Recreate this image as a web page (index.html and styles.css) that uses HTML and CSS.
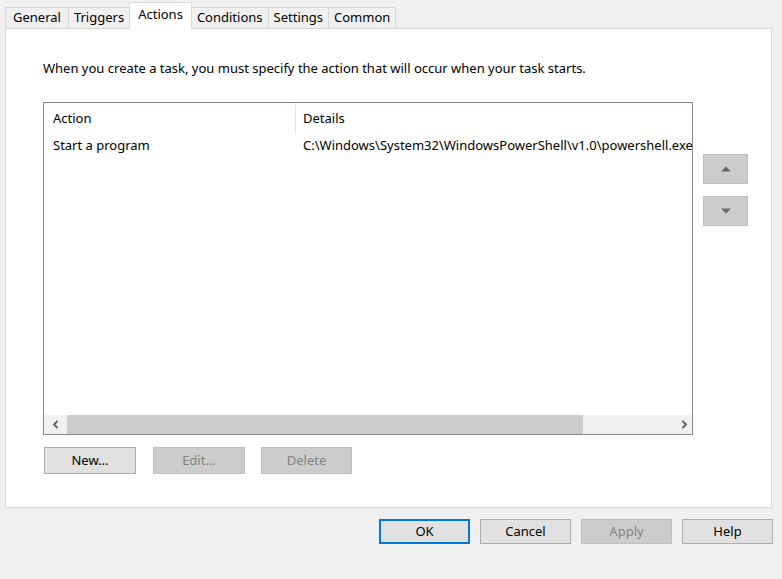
FILE: index.html
```html
<!DOCTYPE html>
<html lang="en">
<head>
  <meta charset="UTF-8">
  <title>Task Properties - Actions</title>
  <link rel="stylesheet" href="styles.css">
</head>
<body>
  <div class="dialog">
    <div class="tabs">
      <div class="tab">General</div>
      <div class="tab">Triggers</div>
      <div class="tab selected">Actions</div>
      <div class="tab">Conditions</div>
      <div class="tab">Settings</div>
      <div class="tab">Common</div>
    </div>

    <div class="panel">
      <p class="intro">When you create a task, you must specify the action that will occur when your task starts.</p>

      <div class="list-row">
        <div class="listbox">
          <div class="list-head">
            <div class="col col-action">Action</div>
            <div class="col col-details">Details</div>
          </div>
          <div class="list-body">
            <div class="list-item">
              <div class="col col-action">Start a program</div>
              <div class="col col-details">C:\Windows\System32\WindowsPowerShell\v1.0\powershell.exe</div>
            </div>
          </div>
          <div class="hscroll">
            <div class="sb-arrow">
              <svg width="8" height="9" viewBox="0 0 8 9"><path d="M5.5 1 L2 4.5 L5.5 8" fill="none" stroke="#606060" stroke-width="1.8"/></svg>
            </div>
            <div class="sb-thumb"></div>
            <div class="sb-track"></div>
            <div class="sb-arrow">
              <svg width="8" height="9" viewBox="0 0 8 9"><path d="M2.5 1 L6 4.5 L2.5 8" fill="none" stroke="#606060" stroke-width="1.8"/></svg>
            </div>
          </div>
        </div>

        <div class="move-btns">
          <div class="move-btn">
            <svg width="10" height="6" viewBox="0 0 10 6"><path d="M0 5.5 L5 0.5 L10 5.5 Z" fill="#6a6a6a"/></svg>
          </div>
          <div class="move-btn">
            <svg width="10" height="6" viewBox="0 0 10 6"><path d="M0 0.5 L5 5.5 L10 0.5 Z" fill="#6a6a6a"/></svg>
          </div>
        </div>
      </div>

      <div class="list-actions">
        <button class="btn">New...</button>
        <button class="btn" disabled>Edit...</button>
        <button class="btn" disabled>Delete</button>
      </div>
    </div>

    <div class="footer">
      <button class="btn default">OK</button>
      <button class="btn">Cancel</button>
      <button class="btn" disabled>Apply</button>
      <button class="btn">Help</button>
    </div>
  </div>
</body>
</html>
```

FILE: styles.css
```css
body {
  margin: 0;
  background: #f0f0f0;
  font-family: "Noto Sans", "Segoe UI", sans-serif;
  font-size: 13px;
  color: #000;
}

.dialog {
  width: 782px;
  height: 579px;
  padding-top: 3px;
  box-sizing: border-box;
}

.tabs {
  display: flex;
  align-items: flex-end;
  height: 25px;
  margin-left: 5px;
}

.tab {
  height: 20px;
  line-height: 18px;
  padding: 0 5px;
  border: 1px solid #d9d9d9;
  border-bottom: none;
  margin-left: -1px;
  background: #f0f0f0;
}
.tab:first-child {
  margin-left: 0;
  padding: 0 7px;
}

.tab.selected {
  height: 26px;
  line-height: 22px;
  padding: 0 8px;
  background: #fff;
  margin-bottom: -1px;
  position: relative;
  z-index: 1;
}

.panel {
  width: 767px;
  height: 480px;
  margin-left: 5px;
  box-sizing: border-box;
  background: #fff;
  border: 1px solid #d9d9d9;
  padding: 31px 0 0 37px;
}

.intro {
  margin: 0;
  line-height: 16px;
}

.list-row {
  display: flex;
  margin-top: 26px;
}

.listbox {
  width: 650px;
  height: 333px;
  box-sizing: border-box;
  border: 1px solid #828790;
  display: flex;
  flex-direction: column;
}

.list-head {
  display: flex;
  height: 31px;
  line-height: 30px;
}
.list-head .col-action {
  border-right: 1px solid #e5e5e5;
}

.list-body {
  flex: 1;
}

.list-item {
  display: flex;
  height: 24px;
  line-height: 22px;
}

.col {
  white-space: nowrap;
  overflow: hidden;
  box-sizing: border-box;
}
.col-action {
  width: 252px;
  padding-left: 9px;
}
.col-details {
  flex: 1;
  padding-left: 7px;
}

.hscroll {
  display: flex;
  height: 19px;
  background: #f0f0f0;
}
.sb-arrow {
  width: 23px;
  display: flex;
  align-items: center;
  justify-content: center;
}
.sb-arrow:last-child {
  width: 17px;
}
.sb-thumb {
  width: 516px;
  background: #cdcdcd;
}
.sb-track {
  flex: 1;
}

.move-btns {
  display: flex;
  flex-direction: column;
  gap: 12px;
  margin: 52px 0 0 10px;
}
.move-btn {
  width: 45px;
  height: 30px;
  box-sizing: border-box;
  background: #cccccc;
  border: 1px solid #bfbfbf;
  display: flex;
  align-items: center;
  justify-content: center;
}

.btn {
  width: 92px;
  height: 27px;
  font-family: inherit;
  font-size: 13px;
  color: #000;
  background: #e1e1e1;
  border: 1px solid #adadad;
  padding: 0 0 2px;
}
.btn:disabled {
  background: #cccccc;
  border-color: #bfbfbf;
  color: #838383;
}
.btn.default {
  border: 2px solid #0078d7;
}

.list-actions {
  display: flex;
  gap: 17px;
  margin: 12px 0 0 1px;
}
.list-actions .btn:last-child {
  width: 91px;
  margin-left: -1px;
}

.footer {
  display: flex;
  justify-content: flex-end;
  gap: 10px;
  padding-right: 9px;
  margin-top: 11px;
}
.footer .btn {
  width: 91px;
  height: 25px;
}
```
